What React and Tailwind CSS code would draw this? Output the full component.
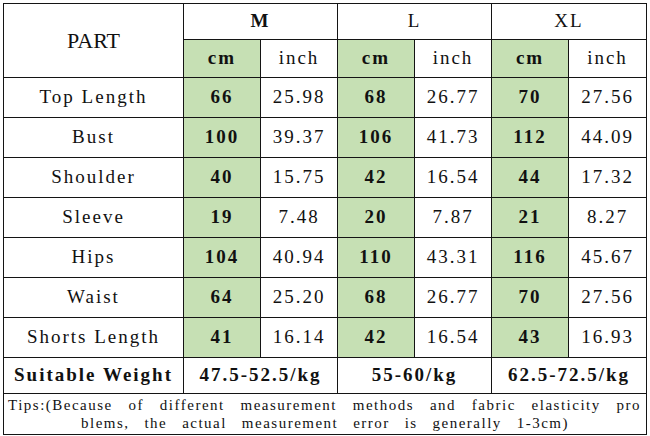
const sizes = ["M", "L", "XL"];

const rows = [
  { part: "Top Length", v: [["66", "25.98"], ["68", "26.77"], ["70", "27.56"]] },
  { part: "Bust", v: [["100", "39.37"], ["106", "41.73"], ["112", "44.09"]] },
  { part: "Shoulder", v: [["40", "15.75"], ["42", "16.54"], ["44", "17.32"]] },
  { part: "Sleeve", v: [["19", "7.48"], ["20", "7.87"], ["21", "8.27"]] },
  { part: "Hips", v: [["104", "40.94"], ["110", "43.31"], ["116", "45.67"]] },
  { part: "Waist", v: [["64", "25.20"], ["68", "26.77"], ["70", "27.56"]] },
  { part: "Shorts Length", v: [["41", "16.14"], ["42", "16.54"], ["43", "16.93"]] },
];

const weights = ["47.5-52.5/kg", "55-60/kg", "62.5-72.5/kg"];

const line1 = ["Tips:(Because", "of", "different", "measurement", "methods", "and", "fabric", "elasticity", "pro"];
const line2 = ["blems,", "the", "actual", "measurement", "error", "is", "generally", "1-3cm)"];

const cell = "border border-[#141414] p-0 text-center align-middle";
const green = "bg-[#c6e0b4]";

export default function App() {
  return (
    <div className="h-[436px] w-[650px] bg-white pl-[3px] pt-[3px] font-['Liberation_Serif',serif] text-[19px] tracking-[2px] text-[#111]">
      <table className="w-[643px] table-fixed border-collapse">
        <colgroup>
          <col className="w-[180px]" />
          <col className="w-[77px]" />
          <col className="w-[77px]" />
          <col className="w-[77px]" />
          <col className="w-[77px]" />
          <col className="w-[77px]" />
          <col className="w-[78px]" />
        </colgroup>
        <tbody>
          <tr className="h-[36px]">
            <td rowSpan={2} className={`${cell} text-[22px] tracking-normal`}>
              PART
            </td>
            {sizes.map((s, i) => (
              <td key={s} colSpan={2} className={`${cell} ${i === 0 ? "font-bold" : ""}`}>
                {s}
              </td>
            ))}
          </tr>
          <tr className="h-[38px]">
            {sizes.map((s) => [
              <td key={s + "cm"} className={`${cell} ${green} font-bold`}>
                cm
              </td>,
              <td key={s + "in"} className={cell}>
                inch
              </td>,
            ])}
          </tr>
          {rows.map((r) => (
            <tr key={r.part} className="h-[40px]">
              <td className={cell}>{r.part}</td>
              {r.v.map(([cm, inch], i) => [
                <td key={i + "cm"} className={`${cell} ${green} font-bold`}>
                  {cm}
                </td>,
                <td key={i + "in"} className={cell}>
                  {inch}
                </td>,
              ])}
            </tr>
          ))}
          <tr className="h-[36px]">
            <td className={`${cell} font-bold`}>Suitable Weight</td>
            {weights.map((w) => (
              <td key={w} colSpan={2} className={`${cell} font-bold`}>
                {w}
              </td>
            ))}
          </tr>
          <tr className="h-[41px]">
            <td colSpan={7} className={`${cell} text-[15px] leading-[18px] tracking-[1.5px]`}>
              <div className="flex justify-between pl-[4px] pr-[5px]">
                {line1.map((w, i) => (
                  <span key={i}>{w}</span>
                ))}
              </div>
              <div className="flex justify-between px-[77px]">
                {line2.map((w, i) => (
                  <span key={i}>{w}</span>
                ))}
              </div>
            </td>
          </tr>
        </tbody>
      </table>
    </div>
  );
}
